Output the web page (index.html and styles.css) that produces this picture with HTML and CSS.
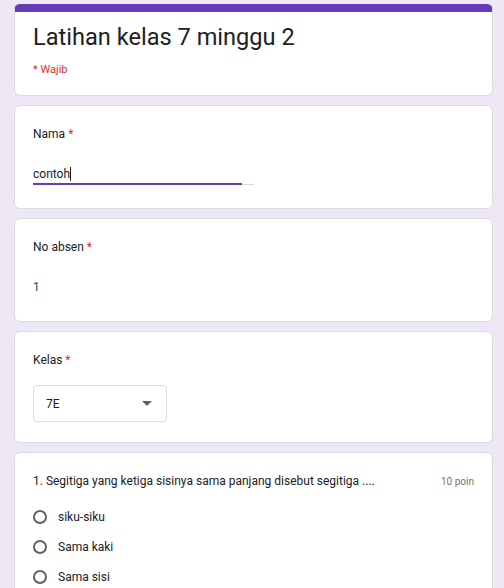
FILE: index.html
```html
<!DOCTYPE html>
<html lang="id">
<head>
  <meta charset="UTF-8">
  <title>Latihan kelas 7 minggu 2</title>
  <link rel="stylesheet" href="styles.css">
</head>
<body>

<div class="form">
  <!-- Header -->
  <div class="card header-card">
    <div class="form-title">Latihan kelas 7 minggu 2</div>
    <div class="required-note">* Wajib</div>
  </div>

  <!-- Nama -->
  <div class="card">
    <div class="question">Nama <span class="star">*</span></div>
    <div class="text-answer">
      <div class="answer-text">contoh<span class="caret"></span></div>
      <div class="underline"><div class="underline-focus"></div></div>
    </div>
  </div>

  <!-- No absen -->
  <div class="card">
    <div class="question">No absen <span class="star">*</span></div>
    <div class="text-answer">
      <div class="answer-text muted">1</div>
      <div class="underline hidden"></div>
    </div>
  </div>

  <!-- Kelas -->
  <div class="card select-card">
    <div class="question">Kelas <span class="star">*</span></div>
    <div class="dropdown">
      <span>7E</span>
      <span class="dropdown-arrow"></span>
    </div>
  </div>

  <!-- Soal 1 -->
  <div class="card quiz-card">
    <div class="quiz-head">
      <div class="question">1. Segitiga yang ketiga sisinya sama panjang disebut segitiga ....</div>
      <div class="points">10 poin</div>
    </div>
    <div class="options">
      <div class="option"><span class="radio"></span>siku-siku</div>
      <div class="option"><span class="radio"></span>Sama kaki</div>
      <div class="option"><span class="radio"></span>Sama sisi</div>
    </div>
  </div>
</div>

</body>
</html>
```

FILE: styles.css
```css
body {
  margin: 0;
  background-color: #ede7f6;
  font-family: Roboto, "Noto Sans", sans-serif;
  color: #202124;
}

.form {
  width: 479px;
  margin-left: 14px;
  padding-top: 4px;
  display: flex;
  flex-direction: column;
  gap: 9px;
}

.card {
  background-color: #fff;
  border: 1px solid #dadce0;
  border-radius: 6px;
  padding: 20px 18px 23px;
}

.header-card {
  border-top: 8px solid #673ab7;
  padding-top: 9px;
  padding-bottom: 17px;
}

.form-title {
  font-size: 23.6px;
  line-height: 32px;
  color: #202124;
}

.required-note {
  margin-top: 9px;
  font-size: 11px;
  line-height: 16px;
  color: #d93025;
}

.question {
  font-size: 12px;
  line-height: 16px;
  color: #202124;
}

.star {
  color: #d93025;
}

.text-answer {
  width: 221px;
  margin-top: 24px;
}

.answer-text {
  font-size: 12px;
  line-height: 16px;
  height: 17px;
}

.answer-text.muted {
  color: #3c4043;
}

.caret {
  display: inline-block;
  width: 1px;
  height: 14px;
  background-color: #202124;
  vertical-align: -3px;
}

.underline {
  height: 2px;
  border-bottom: 1px solid #dadce0;
  box-sizing: border-box;
}

.underline.hidden {
  border-color: transparent;
}

.underline-focus {
  width: 209px;
  height: 2px;
  background-color: #673ab7;
}

.select-card {
  padding-bottom: 20px;
}

.dropdown {
  margin-top: 17px;
  width: 134px;
  height: 37px;
  box-sizing: border-box;
  border: 1px solid #dadce0;
  border-radius: 4px;
  padding: 0 14px 0 12px;
  display: flex;
  align-items: center;
  justify-content: space-between;
  font-size: 12px;
}

.dropdown-arrow {
  width: 0;
  height: 0;
  border-left: 5px solid transparent;
  border-right: 5px solid transparent;
  border-top: 5px solid #5f6368;
}

.quiz-card {
  padding-top: 20px;
}

.quiz-head {
  display: flex;
  justify-content: space-between;
  align-items: center;
}

.points {
  font-size: 10px;
  color: #70757a;
}

.options {
  margin-top: 13px;
}

.option {
  height: 30px;
  display: flex;
  align-items: center;
  gap: 11px;
  font-size: 12px;
}

.radio {
  width: 14px;
  height: 14px;
  box-sizing: border-box;
  border: 2px solid #5f6368;
  border-radius: 50%;
}
```
